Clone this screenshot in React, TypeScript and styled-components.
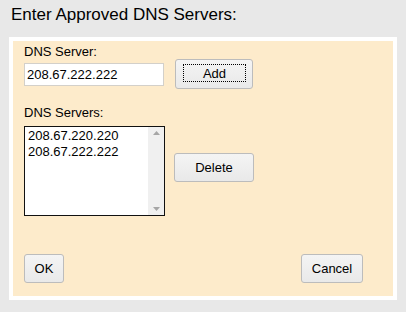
import styled, {createGlobalStyle} from "styled-components";

const GlobalStyle = createGlobalStyle`
    html, body {
        margin: 0;
        padding: 0;
        background: #e8e8e8;
        font-family: "Liberation Sans", Arial, sans-serif;
        color: #000;
    }
`;

const Page = styled.div`
    width: 406px;
    height: 312px;
    background: #e8e8e8;
    box-sizing: border-box;
    padding-top: 5px;
`;

const Title = styled.h1`
    margin: 0 0 12px 0;
    padding-left: 11px;
    font-size: 17px;
    line-height: 20px;
    font-weight: normal;
`;

const Panel = styled.div`
    margin-left: 9px;
    width: 388px;
    height: 263px;
    box-sizing: border-box;
    border: 4px solid #fff;
    background: #fdebcb;
    padding: 3px 30px 13px 11px;
    display: flex;
    flex-direction: column;
`;

const Label = styled.div<{ $gap?: number }>`
    font-size: 13px;
    line-height: 15px;
    margin-top: ${p => p.$gap ?? 0}px;
`;

const Row = styled.div<{ $gap: number; $top?: number }>`
    display: flex;
    align-items: flex-start;
    gap: ${p => p.$gap}px;
    margin-top: ${p => p.$top ?? 0}px;
`;

const TextInput = styled.input`
    width: 140px;
    height: 23px;
    box-sizing: border-box;
    margin: 4px 0 0 0;
    padding: 0 2px;
    border: 1px solid #d3d0ca;
    background: #fff;
    font-family: "Liberation Sans", Arial, sans-serif;
    font-size: 13px;
    color: #000;
    outline: none;
`;

const Button = styled.button<{ $w: number; $h?: number; $top?: number }>`
    width: ${p => p.$w}px;
    height: ${p => p.$h ?? 29}px;
    margin-top: ${p => p.$top ?? 0}px;
    box-sizing: border-box;
    border: 1px solid #bcbcbc;
    border-radius: 3px;
    background: linear-gradient(#f4f4f4, #e9e9e9);
    font-family: "Liberation Sans", Arial, sans-serif;
    font-size: 13px;
    color: #000;
    padding: 0;
    display: flex;
    align-items: center;
    justify-content: center;
`;

const FocusRing = styled.span`
    display: flex;
    align-items: center;
    justify-content: center;
    align-self: stretch;
    flex: 1;
    margin: 4px 6px 6px 7px;
    border: 1px dotted #000;
`;

const ListBox = styled.div`
    width: 141px;
    height: 90px;
    box-sizing: border-box;
    border: 1px solid #111;
    background: #fff;
    display: flex;
`;

const Items = styled.div`
    flex: 1;
    padding: 1px 0 0 3px;
`;

const Item = styled.div`
    font-size: 13px;
    line-height: 16px;
`;

const ScrollBar = styled.div`
    width: 16px;
    background: #f0f0f0;
    display: flex;
    flex-direction: column;
    justify-content: space-between;
    align-items: center;
    padding: 4px 0;
`;

const Footer = styled.div`
    margin-top: auto;
    display: flex;
    justify-content: space-between;
`;

const Arrow = ({down}: { down?: boolean }) => (
    <svg width="7" height="4" viewBox="0 0 7 4">
        <path d={down ? "M0 0 L3.5 4 L7 0 Z" : "M0 4 L3.5 0 L7 4 Z"} fill="#a6a6a6"/>
    </svg>
);

const servers = ["208.67.220.220", "208.67.222.222"];

export default function App() {
    return (
        <Page>
            <GlobalStyle/>
            <Title>Enter Approved DNS Servers:</Title>
            <Panel>
                <Label>DNS Server:</Label>
                <Row $gap={11}>
                    <TextInput defaultValue="208.67.222.222"/>
                    <Button $w={78} $h={30}>
                        <FocusRing>Add</FocusRing>
                    </Button>
                </Row>
                <Label $gap={16}>DNS Servers:</Label>
                <Row $gap={9} $top={6}>
                    <ListBox>
                        <Items>
                            {servers.map(s => <Item key={s}>{s}</Item>)}
                        </Items>
                        <ScrollBar>
                            <Arrow/>
                            <Arrow down/>
                        </ScrollBar>
                    </ListBox>
                    <Button $w={80} $top={27}>Delete</Button>
                </Row>
                <Footer>
                    <Button $w={40}>OK</Button>
                    <Button $w={62}>Cancel</Button>
                </Footer>
            </Panel>
        </Page>
    );
}
